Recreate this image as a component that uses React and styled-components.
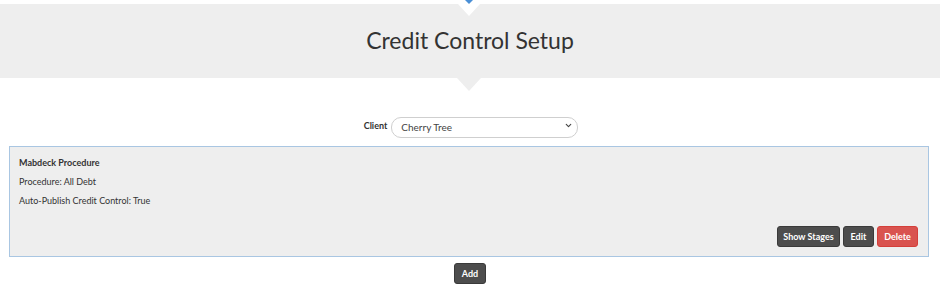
import React from 'react'
import styled, { createGlobalStyle } from 'styled-components'
import { ChevronDown } from 'lucide-react'

const Global = createGlobalStyle`
  body {
    margin: 0;
    background: #fff;
    font-family: Lato, "Open Sans", Arial, sans-serif;
    color: #333;
  }
`

const Page = styled.div`
  width: 940px;
  display: flex;
  flex-direction: column;
  align-items: center;
`

const TopStrip = styled.div`
  width: 100%;
  height: 4px;
  display: flex;
  justify-content: center;
`

const BlueTip = styled.div`
  width: 0;
  height: 0;
  margin-left: -2px;
  border-left: 4px solid transparent;
  border-right: 4px solid transparent;
  border-top: 4px solid #4a8fd6;
`

const Banner = styled.header`
  position: relative;
  width: 100%;
  height: 74px;
  background: #eeeeee;
  display: flex;
  align-items: center;
  justify-content: center;
  &::before {
    content: '';
    position: absolute;
    top: 0;
    left: 458px;
    border-left: 11px solid transparent;
    border-right: 11px solid transparent;
    border-top: 12px solid #fff;
  }
  &::after {
    content: '';
    position: absolute;
    top: 100%;
    left: 457px;
    border-left: 12px solid transparent;
    border-right: 12px solid transparent;
    border-top: 13px solid #eeeeee;
  }
`

const Title = styled.h1`
  margin: 0 0 3px 0;
  font-size: 23px;
  font-weight: 400;
  color: #333;
`

const ClientRow = styled.div`
  margin-top: 37px;
  display: flex;
  align-items: center;
  gap: 4px;
  margin-left: 2px;
`

const Label = styled.label`
  font-size: 9px;
  font-weight: 700;
  color: #333;
`

const SelectWrap = styled.div`
  position: relative;
  width: 187px;
  height: 21px;
`

const Select = styled.select`
  appearance: none;
  width: 100%;
  height: 100%;
  border: 1px solid #cfcfcf;
  border-radius: 10px;
  background: #fff;
  padding: 0 0 0 9px;
  font-family: Lato, "Open Sans", Arial, sans-serif;
  font-size: 10px;
  color: #444;
  outline: none;
`

const Caret = styled(ChevronDown)`
  position: absolute;
  right: 5px;
  top: 6px;
  pointer-events: none;
  color: #444;
`

const Card = styled.section`
  box-sizing: border-box;
  align-self: flex-start;
  margin: 10px 0 0 9px;
  width: 920px;
  height: 111px;
  background: #eeeeee;
  border: 1px solid #a9c6e2;
  padding: 6px 10px 9px 9px;
  display: flex;
  flex-direction: column;
`

const Line = styled.div`
  font-size: 9px;
  line-height: 19px;
  font-weight: ${p => (p.$bold ? 700 : 400)};
  color: #333;
`

const Actions = styled.div`
  margin-top: auto;
  display: flex;
  justify-content: flex-end;
  gap: 3px;
`

const Button = styled.button`
  box-sizing: border-box;
  width: ${p => p.$w}px;
  height: 21px;
  padding: 0;
  border-radius: 3px;
  border: 1px solid ${p => (p.$danger ? '#d43f3a' : '#3a3a3a')};
  background: ${p => (p.$danger ? '#d9534f' : '#4d4d4d')};
  color: #fff;
  font-family: Lato, "Open Sans", Arial, sans-serif;
  font-size: 9px;
  font-weight: 700;
  cursor: pointer;
`

const AddButton = styled(Button)`
  margin-top: 6px;
`

export default function App() {
  return (
    <Page>
      <Global />
      <TopStrip>
        <BlueTip />
      </TopStrip>
      <Banner>
        <Title>Credit Control Setup</Title>
      </Banner>
      <ClientRow>
        <Label>Client</Label>
        <SelectWrap>
          <Select defaultValue="cherry">
            <option value="cherry">Cherry Tree</option>
          </Select>
          <Caret size={9} strokeWidth={3} />
        </SelectWrap>
      </ClientRow>
      <Card>
        <Line $bold>Mabdeck Procedure</Line>
        <Line>Procedure: All Debt</Line>
        <Line>Auto-Publish Credit Control: True</Line>
        <Actions>
          <Button $w={63}>Show Stages</Button>
          <Button $w={31}>Edit</Button>
          <Button $w={41} $danger>Delete</Button>
        </Actions>
      </Card>
      <AddButton $w={32}>Add</AddButton>
    </Page>
  )
}
